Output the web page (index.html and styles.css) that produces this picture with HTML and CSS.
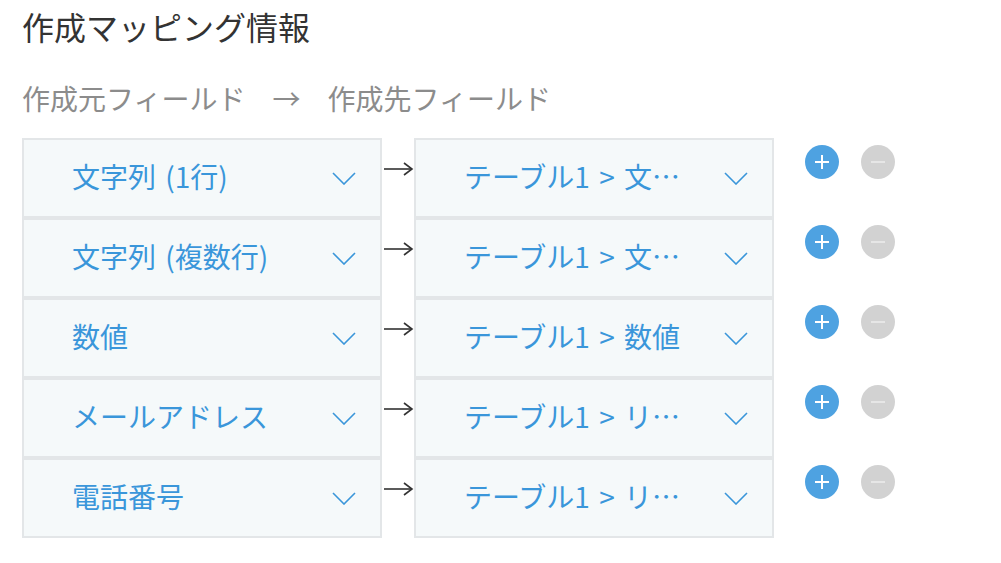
FILE: index.html
```html
<!DOCTYPE html>
<html lang="ja">
<head>
  <meta charset="UTF-8" />
  <title>作成マッピング情報</title>
  <link rel="stylesheet" href="styles.css">
</head>
<body>
  <div class="container">
    <h1 class="title">作成マッピング情報</h1>

    <div class="mapping-head">
      <span class="head-src">作成元フィールド</span>
      <span class="head-arrow">→</span>
      <span class="head-dst">作成先フィールド</span>
    </div>

    <div class="mapping-list">
      <div class="mapping-row">
        <div class="field-select">
          <span class="field-text">文字列 (1行)</span>
          <svg class="chevron" width="24" height="13" viewBox="0 0 24 13"><polyline points="1,1 12,12 23,1" /></svg>
        </div>
        <svg class="map-arrow" width="32" height="14" viewBox="0 0 32 14"><line x1="2" y1="7" x2="30" y2="7" /><polyline points="22,1 30,7 22,13" /></svg>
        <div class="field-select">
          <span class="field-text">テーブル1 &gt; 文…</span>
          <svg class="chevron" width="24" height="13" viewBox="0 0 24 13"><polyline points="1,1 12,12 23,1" /></svg>
        </div>
        <div class="row-actions">
          <button class="btn-circle btn-add" type="button"><span class="plus"></span></button>
          <button class="btn-circle btn-remove" type="button"><span class="minus"></span></button>
        </div>
      </div>

      <div class="mapping-row">
        <div class="field-select">
          <span class="field-text">文字列 (複数行)</span>
          <svg class="chevron" width="24" height="13" viewBox="0 0 24 13"><polyline points="1,1 12,12 23,1" /></svg>
        </div>
        <svg class="map-arrow" width="32" height="14" viewBox="0 0 32 14"><line x1="2" y1="7" x2="30" y2="7" /><polyline points="22,1 30,7 22,13" /></svg>
        <div class="field-select">
          <span class="field-text">テーブル1 &gt; 文…</span>
          <svg class="chevron" width="24" height="13" viewBox="0 0 24 13"><polyline points="1,1 12,12 23,1" /></svg>
        </div>
        <div class="row-actions">
          <button class="btn-circle btn-add" type="button"><span class="plus"></span></button>
          <button class="btn-circle btn-remove" type="button"><span class="minus"></span></button>
        </div>
      </div>

      <div class="mapping-row">
        <div class="field-select">
          <span class="field-text">数値</span>
          <svg class="chevron" width="24" height="13" viewBox="0 0 24 13"><polyline points="1,1 12,12 23,1" /></svg>
        </div>
        <svg class="map-arrow" width="32" height="14" viewBox="0 0 32 14"><line x1="2" y1="7" x2="30" y2="7" /><polyline points="22,1 30,7 22,13" /></svg>
        <div class="field-select">
          <span class="field-text">テーブル1 &gt; 数値</span>
          <svg class="chevron" width="24" height="13" viewBox="0 0 24 13"><polyline points="1,1 12,12 23,1" /></svg>
        </div>
        <div class="row-actions">
          <button class="btn-circle btn-add" type="button"><span class="plus"></span></button>
          <button class="btn-circle btn-remove" type="button"><span class="minus"></span></button>
        </div>
      </div>

      <div class="mapping-row">
        <div class="field-select">
          <span class="field-text">メールアドレス</span>
          <svg class="chevron" width="24" height="13" viewBox="0 0 24 13"><polyline points="1,1 12,12 23,1" /></svg>
        </div>
        <svg class="map-arrow" width="32" height="14" viewBox="0 0 32 14"><line x1="2" y1="7" x2="30" y2="7" /><polyline points="22,1 30,7 22,13" /></svg>
        <div class="field-select">
          <span class="field-text">テーブル1 &gt; リ…</span>
          <svg class="chevron" width="24" height="13" viewBox="0 0 24 13"><polyline points="1,1 12,12 23,1" /></svg>
        </div>
        <div class="row-actions">
          <button class="btn-circle btn-add" type="button"><span class="plus"></span></button>
          <button class="btn-circle btn-remove" type="button"><span class="minus"></span></button>
        </div>
      </div>

      <div class="mapping-row">
        <div class="field-select">
          <span class="field-text">電話番号</span>
          <svg class="chevron" width="24" height="13" viewBox="0 0 24 13"><polyline points="1,1 12,12 23,1" /></svg>
        </div>
        <svg class="map-arrow" width="32" height="14" viewBox="0 0 32 14"><line x1="2" y1="7" x2="30" y2="7" /><polyline points="22,1 30,7 22,13" /></svg>
        <div class="field-select">
          <span class="field-text">テーブル1 &gt; リ…</span>
          <svg class="chevron" width="24" height="13" viewBox="0 0 24 13"><polyline points="1,1 12,12 23,1" /></svg>
        </div>
        <div class="row-actions">
          <button class="btn-circle btn-add" type="button"><span class="plus"></span></button>
          <button class="btn-circle btn-remove" type="button"><span class="minus"></span></button>
        </div>
      </div>
    </div>
  </div>
</body>
</html>
```

FILE: styles.css
```css
* {
  margin: 0; padding: 0; box-sizing: border-box;
}
body {
  font-family: "Noto Sans CJK JP", "Noto Sans", sans-serif;
  background-color: #fff;
}
.container {
  padding: 4px 22px 0;
}
.title {
  font-size: 32px;
  font-weight: normal;
  line-height: 44px;
  color: #333;
}
.mapping-head {
  display: flex;
  margin-top: 30px;
  font-size: 28px;
  line-height: 40px;
  color: #8c8c8c;
}
.head-arrow {
  width: 82px;
  text-align: center;
}
.mapping-list {
  margin-top: 20px;
}
.mapping-row {
  display: flex;
  align-items: flex-start;
}
.field-select {
  display: flex;
  align-items: center;
  justify-content: space-between;
  width: 360px;
  height: 80px;
  padding: 0 24px 4px 48px;
  border: 2px solid #e3e6e8;
  background-color: #f5f9fa;
  color: #3a96da;
  font-size: 28px;
}
.field-text {
  white-space: nowrap;
  word-spacing: 3px;
}
.chevron {
  margin-top: 4px;
}
.chevron polyline {
  fill: none;
  stroke: #3a96da;
  stroke-width: 1.6;
}
.map-arrow {
  margin-top: 24px;
  flex: none;
}
.map-arrow line, .map-arrow polyline {
  fill: none;
  stroke: #333;
  stroke-width: 1.6;
}
.row-actions {
  display: flex;
  gap: 22px;
  margin: 7px 0 0 31px;
}
.btn-circle {
  position: relative;
  width: 34px;
  height: 34px;
  border: none;
  border-radius: 50%;
  cursor: pointer;
}
.btn-add {
  background-color: #4ea2e1;
}
.btn-remove {
  background-color: #d2d2d2;
}
.plus::before, .plus::after, .minus::before {
  content: "";
  position: absolute;
  left: 50%;
  top: 50%;
  background-color: #fff;
}
.plus::before {
  width: 14px;
  height: 2px;
  margin: -1px 0 0 -7px;
}
.plus::after {
  width: 2px;
  height: 14px;
  margin: -7px 0 0 -1px;
}
.minus::before {
  width: 14px;
  height: 2px;
  margin: -1px 0 0 -7px;
  background-color: #e6e6e6;
}
```
